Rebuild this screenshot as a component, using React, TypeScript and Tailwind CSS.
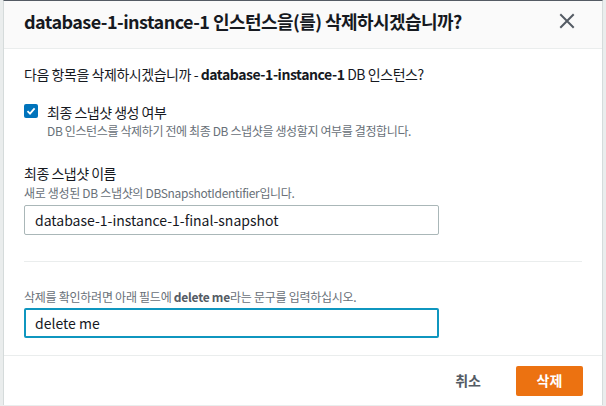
import { useState } from "react";

const font = { fontFamily: '"Noto Sans CJK KR", "Noto Sans", sans-serif' };

function CloseIcon() {
  return (
    <svg width="16" height="16" viewBox="0 0 16 16" fill="none">
      <path d="M2 2L14 14M14 2L2 14" stroke="#545b64" strokeWidth="2" strokeLinecap="square" />
    </svg>
  );
}

function Checkbox({ checked }: { checked: boolean }) {
  return (
    <span className="mt-[1px] flex h-[14px] w-[14px] shrink-0 items-center justify-center rounded-[2px] bg-[#0073bb]">
      {checked && (
        <svg width="10" height="10" viewBox="0 0 10 10" fill="none">
          <path d="M1.5 5.2L4 7.6L8.6 2.4" stroke="white" strokeWidth="1.8" />
        </svg>
      )}
    </span>
  );
}

export default function App() {
  const [snapshotName, setSnapshotName] = useState("database-1-instance-1-final-snapshot");
  const [confirmText, setConfirmText] = useState("delete me");

  return (
    <div className="h-[406px] w-[606px] overflow-hidden bg-[#eaeded] text-[#16191f]" style={font}>
      <div className="mx-[3px] flex h-[405px] flex-col border-x border-t border-[#d5dbdb] border-t-[#545b64] bg-white">
        {/* Header */}
        <div className="flex h-[48px] shrink-0 items-center justify-between border-b border-[#eaeded] bg-[#fafafa] pb-[8px] pl-5 pr-[23px]">
          <h2 className="text-[18px] font-bold leading-none tracking-[-0.55px]">
            database-1-instance-1 인스턴스을(를) 삭제하시겠습니까?
          </h2>
          <button className="flex h-6 w-6 items-center justify-center">
            <CloseIcon />
          </button>
        </div>

        {/* Body */}
        <div className="flex-1 px-5">
          <p className="mt-[15px] text-[14px] leading-[20px] tracking-[-0.45px]">
            다음 항목을 삭제하시겠습니까 - <span className="font-bold">database-1-instance-1</span> DB 인스턴스?
          </p>

          <div className="mt-[19px] flex gap-[9px]">
            <Checkbox checked={true} />
            <div>
              <div className="text-[14px] leading-[18px] tracking-[-0.5px]">최종 스냅샷 생성 여부</div>
              <div className="mt-[2px] text-[12px] leading-[16px] tracking-[-0.37px] text-[#687078]">
                DB 인스턴스를 삭제하기 전에 최종 DB 스냅샷을 생성할지 여부를 결정합니다.
              </div>
            </div>
          </div>

          <div className="mt-[25px] text-[14px] leading-[18px] tracking-[-0.5px]">최종 스냅샷 이름</div>
          <div className="mt-[3px] text-[12px] leading-[16px] tracking-[-0.32px] text-[#687078]">
            새로 생성된 DB 스냅샷의 DBSnapshotIdentifier입니다.
          </div>
          <input
            value={snapshotName}
            onChange={(e) => setSnapshotName(e.target.value)}
            className="mt-[4px] h-[30px] w-[415px] rounded-[2px] border border-[#aab7b8] px-[10px] text-[14px] text-[#16191f] outline-none"
            style={font}
          />

          <div className="mt-[26px] border-t border-[#eaeded]" />

          <div className="mt-[27px] text-[12px] leading-[16px] tracking-[-0.26px] text-[#687078]">
            삭제를 확인하려면 아래 필드에 <span className="font-bold text-[#545b64]">delete me</span>라는 문구를 입력하십시오.
          </div>
          <input
            autoFocus
            value={confirmText}
            onChange={(e) => setConfirmText(e.target.value)}
            className="mt-[3px] h-[30px] w-[415px] rounded-[2px] border-2 border-[#0f96bf] px-[9px] text-[14px] text-[#16191f] caret-[#16191f] outline-none"
            style={font}
          />
        </div>

        {/* Footer */}
        <div className="flex h-[50px] shrink-0 items-center justify-end gap-[35px] border-t border-[#eaeded] pr-[19px]">
          <button className="text-[14px] font-bold text-[#545b64]">취소</button>
          <button className="h-[30px] w-[67px] rounded-[2px] bg-[#ec7211] text-[14px] font-bold text-white">
            삭제
          </button>
        </div>
      </div>
    </div>
  );
}
